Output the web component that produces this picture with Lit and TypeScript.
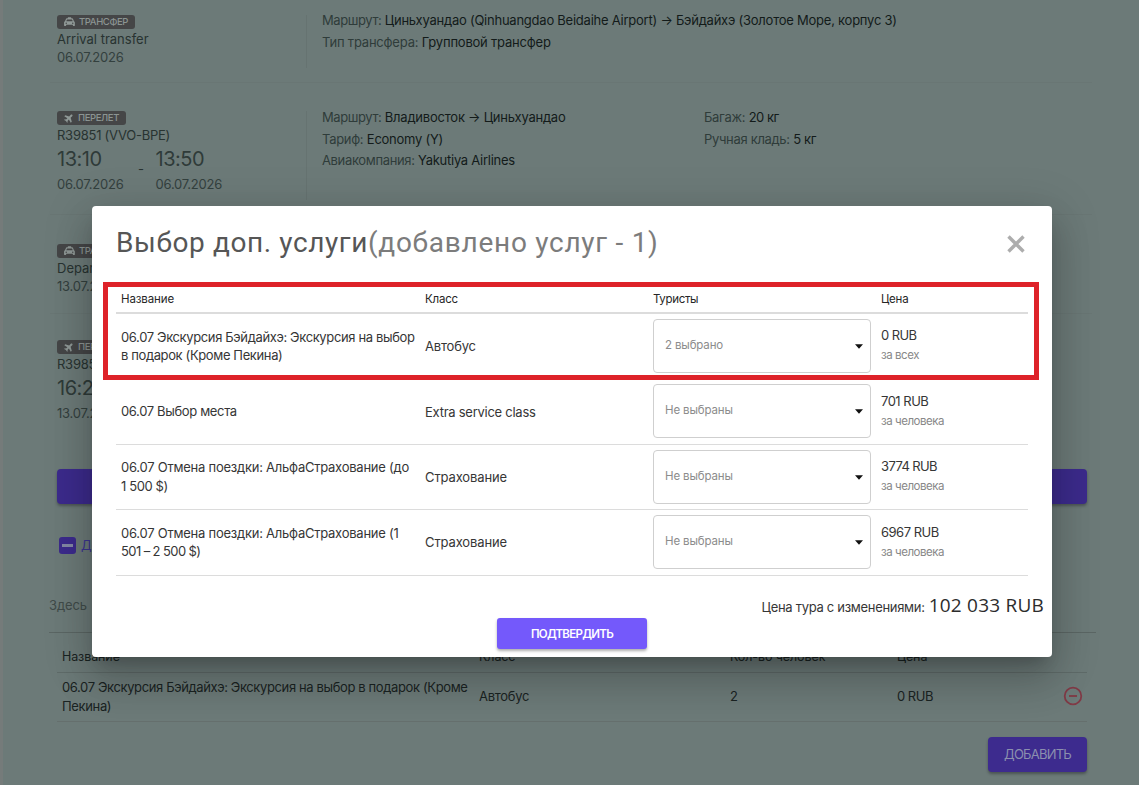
import { LitElement, html, css, nothing } from "lit";
import { customElement } from "lit/decorators.js";

/** Text run with its own tracking (px). */
const t = (text: string, ls = -0.25, cls = "") =>
  html`<span class=${cls} style="letter-spacing:${ls}px">${text}</span>`;

const carIcon = html`<svg class="ico" viewBox="0 0 12 11">
  <path fill-rule="evenodd" d="M4.2 .3h3.6v1.2h1.1c.5 0 .8.3 1 .7l1 2.6c.6.3 1 .8 1 1.5v3c0 .3-.2.5-.4.5h-1.3c-.3 0-.5-.2-.5-.5v-.8H2.3v.8c0 .3-.2.5-.5.5H.5c-.3 0-.5-.2-.5-.5v-3c0-.7.4-1.200 1-1.500l1.100-2.600c.2-.4.5-.7 1-.7h1.100zM3.300 2.700l-.9 2.100h7.200l-.9-2.100zM2.400 6a.8.8 0 1 0 0 1.600.8.8 0 0 0 0-1.600zM9.600 6a.8.8 0 1 0 0 1.600.8.8 0 0 0 0-1.600z"/></svg>`;

const planeIcon = html`<svg class="ico plane" viewBox="0 0 24 24">
  <path transform="rotate(45 12 12)" d="M23 17v-3.500l-8.500-4.500V3.500C14.500 2 13.300 1 12 1S9.500 2 9.500 3.500V9L1 13.500V17l8.500-2v4.500L7 21.500v2l5-1.300 5 1.300v-2l-2.500-2V15z"/></svg>`;

const caret = html`<svg class="caret" viewBox="0 0 8 5"><path d="M0 .3h8L4 4.700z"/></svg>`;

interface Service {
  name: [string, number][];
  kind: [string, number];
  picked: string;
  price: [string, number];
  per: string;
}

const services: Service[] = [
  {
    name: [["06.07 Экскурсия Бэйдайхэ: Экскурсия на выбор", -0.365], ["в подарок (Кроме Пекина)", -0.38]],
    kind: ["Автобус", -0.2], picked: "2 выбрано", price: ["0 RUB", -0.6], per: "за всех",
  },
  {
    name: [["06.07 Выбор места", -0.35]],
    kind: ["Extra service class", -0.26], picked: "Не выбраны", price: ["701 RUB", -0.5], per: "за человека",
  },
  {
    name: [["06.07 Отмена поездки: АльфаСтрахование (до", -0.242], ["1 500 $)", -0.4]],
    kind: ["Страхование", -0.12], picked: "Не выбраны", price: ["3774 RUB", -0.62], per: "за человека",
  },
  {
    name: [["06.07 Отмена поездки: АльфаСтрахование (1", -0.242], ["501 – 2 500 $)", -0.6]],
    kind: ["Страхование", -0.12], picked: "Не выбраны", price: ["6967 RUB", -0.5], per: "за человека",
  },
];

@customElement("service-dialog")
export class ServiceDialog extends LitElement {
  static styles = css`
    :host { display: block; box-sizing: border-box; width: 960px; height: 451px; background: #fff; border-radius: 4px;
      box-shadow: 0 11px 15px -7px rgba(0,0,0,.2), 0 24px 38px 3px rgba(0,0,0,.14), 0 9px 46px 8px rgba(0,0,0,.12);
      font: 13px/19px Inter, sans-serif; color: #363636; padding: 0 8px 0 24px; white-space: nowrap; }
    .head { display: flex; justify-content: space-between; height: 80px; }
    .title { font: 400 28px/36px Roboto, sans-serif; color: #565656; padding-top: 19px; }
    .muted { color: #7c7c7c; }
    .close { width: 18px; height: 18px; margin: 29px 19px 0 0; stroke: #adadad; stroke-width: 3.4; }
    .row { display: grid; grid-template-columns: 304px 228px 228px 152px; width: 912px; height: 65.400px;
      box-sizing: border-box; border-bottom: 1px solid #dcdcdc; align-items: center; }
    .row > div { padding-left: 5px; }
    .row.top { height: 28px; border-bottom: 2px solid #dcdcdc; font-size: 11.500px; color: #262626; }
    .row.top > div { padding-top: 1px; }
    .name { line-height: 18.500px; }
    .name span { display: block; }
    .kind { padding-top: 1px; }
    .row .pick { padding: 0 0 .5px 5px; }
    .select { box-sizing: border-box; width: 218px; height: 54px; border: 1px solid #cfcfcf; border-radius: 4px;
      display: flex; align-items: center; justify-content: space-between; padding: 0 7px 0 11px; font-size: 11.500px; color: #8c8c8c; }
    .select span { margin-top: -1px; }
    .caret { width: 8px; height: 5px; fill: #111; margin-top: 1px; }
    .price { display: grid; line-height: 20px; margin-top: -1.500px; }
    .per { font-size: 11.500px; color: #888; }
    .total { display: flex; justify-content: flex-end; align-items: baseline; gap: 4px; height: 24px; margin-top: 17px; line-height: 24px; }
    .sum { font: 400 19px/24px "Open Sans", sans-serif; color: #2c2c2c; }
    .foot { padding: 1px 0 0 381px; }
    .ok { display: block; width: 150px; height: 31px; border: 0; border-radius: 3px; background: #7459fb; color: #fff; padding: 1px 0 0;
      font: 600 11.500px/30px Inter, sans-serif; box-shadow: 0 2px 3px rgba(0,0,0,.32); }
  `;

  render() {
    return html`
      <div class="head">
        <div class="title">${t("Выбор доп. услуги", 0.6)}${t("(добавлено услуг - 1)", 0.73, "muted")}</div>
        <svg class="close" viewBox="0 0 18 18"><path d="M1.500 1.500l15 15M16.500 1.500l-15 15" /></svg>
      </div>
      <div class="row top">
        <div>${t("Название", -0.12)}</div><div>${t("Класс", -0.2)}</div><div>${t("Туристы", -0.34)}</div><div>${t("Цена", -0.2)}</div>
      </div>
      ${services.map((s) => html`
        <div class="row">
          <div class="name">${s.name.map(([x, ls]) => t(x, ls))}</div>
          <div class="kind">${t(...s.kind)}</div>
          <div class="pick"><div class="select">${t(s.picked, -0.14)}${caret}</div></div>
          <div class="price">${t(...s.price)}${t(s.per, -0.46, "per")}</div>
        </div>`)}
      <div class="total">${t("Цена тура с изменениями:", -0.3)}${t("102 033 RUB", 0.22, "sum")}</div>
      <div class="foot"><button class="ok">${t("ПОДТВЕРДИТЬ", -0.7)}</button></div>
    `;
  }
}

@customElement("app-root")
export class AppRoot extends LitElement {
  static styles = css`
    :host { display: block; position: relative; box-sizing: border-box; width: 1139px; height: 785px; overflow: hidden;
      background: #6c7a78; border-left: 3px solid #757b7a; font: 13px/18px Inter, sans-serif; color: #283331; white-space: nowrap; }
    .seg { display: grid; grid-template-columns: 250px 397px auto; margin: 0 47px; padding-left: 7px; box-sizing: border-box; }
    .seg + .seg { border-top: 1px solid #697674; }
    .left { border-right: 1px solid #667371; margin-bottom: 14px; }
    .left > div { height: 18px; }
    .left > .badge { height: 14px; width: fit-content; line-height: 14px; margin-bottom: 1px; display: flex; align-items: center;
      gap: 4px; padding: 0 7px; border-radius: 3px; background: #454647; color: #8b9492; font-size: 9.500px; font-weight: 500; box-sizing: border-box; }
    .ico { width: 11px; height: 10px; fill: #8f9896; }
    .ico.plane { width: 10px; }
    .date { color: #33403e; }
    .left > .times { display: grid; grid-template-columns: 81px 17.500px auto; height: 50px; margin-top: 2px; }
    .clock { display: block; font-size: 20px; line-height: 26px; color: #2f3b39; }
    .times .date { display: block; line-height: 24px; }
    .dash { line-height: 46px; }
    .info { padding-left: 15px; }
    .info, .bags { line-height: 21.700px; color: #2f3c3a; margin-top: -4px; }
    .info b, .bags b { font-weight: 400; color: #131b1a; margin-left: 3.500px; }
    .bar { height: 35px; margin: 0 52px 0 54px; background: #3c2b8c; border-radius: 4px; box-shadow: 0 2px 3px rgba(0,0,0,.3); }
    .more { display: flex; align-items: center; gap: 5px; padding-left: 56px; height: 18px; margin-top: 32px; color: #3c3590; }
    .more > span:last-child { margin-top: -1px; }
    .box { width: 17px; height: 17px; border-radius: 3px; background: #3c2b8c; display: grid; place-items: center; }
    .box i { width: 11px; height: 3px; background: #8388a4; }
    .hint { margin: 41px 43px 0 46px; height: 37px; line-height: 20px; color: #404b49; border-bottom: 1px solid #5b6664; }
    .trow { display: grid; grid-template-columns: 417px 251px 167px 1fr 35px; margin: 0 52px 0 54px; padding-left: 5px;
      align-items: center; border-bottom: 1px solid #656f6d; height: 49px; box-sizing: border-box; line-height: 18.500px; color: #1a2322; }
    .trow.th { height: 40px; padding-top: 9px; border-color: #5f6b69; font-size: 12.500px; }
    .trow:not(.th) > div { margin-top: -1px; }
    .trow span { display: block; }
    .minus { width: 20px; height: 20px; fill: none; stroke: #803a46; stroke-width: 1.800; margin: -3px 0 0 11px; }
    .actions { display: flex; justify-content: flex-end; padding: 15px 52px 0 0; }
    .add { width: 99px; height: 35px; border: 0; border-radius: 4px; background: #3d2b8e; color: #8b8fae; padding: 0;
      font: 400 13px/35px Inter, sans-serif; box-shadow: 0 2px 3px rgba(0,0,0,.32); }
    service-dialog { position: absolute; left: 89px; top: 206px; }
    .mark { position: absolute; left: 100px; top: 282px; width: 936px; height: 98px; border: 5px solid #de2229; box-sizing: border-box; }
    .s1 { height: 82px; padding-top: 15px; }
    .s1 .info { margin-top: -5px; }
    .s2 { height: 132px; padding-top: 28px; }
    .s3 { height: 99px; padding-top: 29px; }
    .s4 { height: 156px; padding-top: 26px; }
  `;

  private line(label: string, ls: number, value: string, vls: number) {
    return html`<div>${t(label, ls)}<b>${t(value, vls)}</b></div>`;
  }

  private badge(kind: "car" | "plane") {
    return html`<div class="badge">${kind === "car" ? carIcon : planeIcon}${kind === "car" ? t("ТРАНСФЕР", -0.38) : t("ПЕРЕЛЕТ", -0.38)}</div>`;
  }

  private stamp(time: string, date: string) {
    return html`<div><span class="clock" style="letter-spacing:-.5px">${time}</span><span class="date">${t(date, -0.22)}</span></div>`;
  }

  private times(date: string, a: string, b?: string) {
    return html`<div class="times">
      ${this.stamp(a, date)}
      ${b ? html`<span class="dash">-</span>${this.stamp(b, date)}` : nothing}
    </div>`;
  }

  render() {
    return html`
      <div class="seg s1">
        <div class="left">${this.badge("car")}
          <div>${t("Arrival transfer", 0)}</div><div class="date">${t("06.07.2026", -0.22)}</div></div>
        <div class="info">
          ${this.line("Маршрут:", -0.42, "Циньхуандао (Qinhuangdao Beidaihe Airport) → Бэйдайхэ (Золотое Море, корпус 3)", -0.24)}
          ${this.line("Тип трансфера:", -0.2, "Групповой трансфер", -0.21)}</div>
      </div>
      <div class="seg s2">
        <div class="left">${this.badge("plane")}
          <div>${t("R39851 (VVO-BPE)", -0.25)}</div>${this.times("06.07.2026", "13:10", "13:50")}</div>
        <div class="info">
          ${this.line("Маршрут:", -0.42, "Владивосток → Циньхуандао", -0.23)}
          ${this.line("Тариф:", -0.3, "Economy (Y)", -0.25)}
          ${this.line("Авиакомпания:", -0.35, "Yakutiya Airlines", -0.27)}</div>
        <div class="bags">
          ${this.line("Багаж:", -0.3, "20 кг", -0.5)}
          ${this.line("Ручная кладь:", -0.32, "5 кг", -0.4)}</div>
      </div>
      <div class="seg s3">
        <div class="left">${this.badge("car")}
          <div>${t("Departure", 0)}</div><div class="date">${t("13.07.2026", -0.22)}</div></div>
      </div>
      <div class="seg s4">
        <div class="left">${this.badge("plane")}
          <div>${t("R39852", -0.25)}</div>${this.times("13.07.2026", "16:20")}</div>
      </div>
      <div class="bar"></div>
      <div class="more"><span class="box"><i></i></span>${t("Доп.", -0.2)}</div>
      <div class="hint">${t("Здесь", -0.1)}</div>
      <div class="trow th">
        <div>${t("Название", -0.1)}</div><div>${t("Класс", -0.1)}</div><div>${t("Кол-во человек", -0.1)}</div><div>${t("Цена", -0.1)}</div>
      </div>
      <div class="trow">
        <div>${t("06.07 Экскурсия Бэйдайхэ: Экскурсия на выбор в подарок (Кроме", -0.376)}${t("Пекина)", -0.35)}</div>
        <div>${t("Автобус", -0.3)}</div><div>2</div><div>${t("0 RUB", -0.5)}</div>
        <svg class="minus" viewBox="0 0 20 20"><circle cx="10" cy="10" r="8.300" /><path d="M6 10h8" /></svg>
      </div>
      <div class="actions"><button class="add">${t("ДОБАВИТЬ", -0.76)}</button></div>
      <service-dialog></service-dialog>
      <div class="mark"></div>
    `;
  }
}
